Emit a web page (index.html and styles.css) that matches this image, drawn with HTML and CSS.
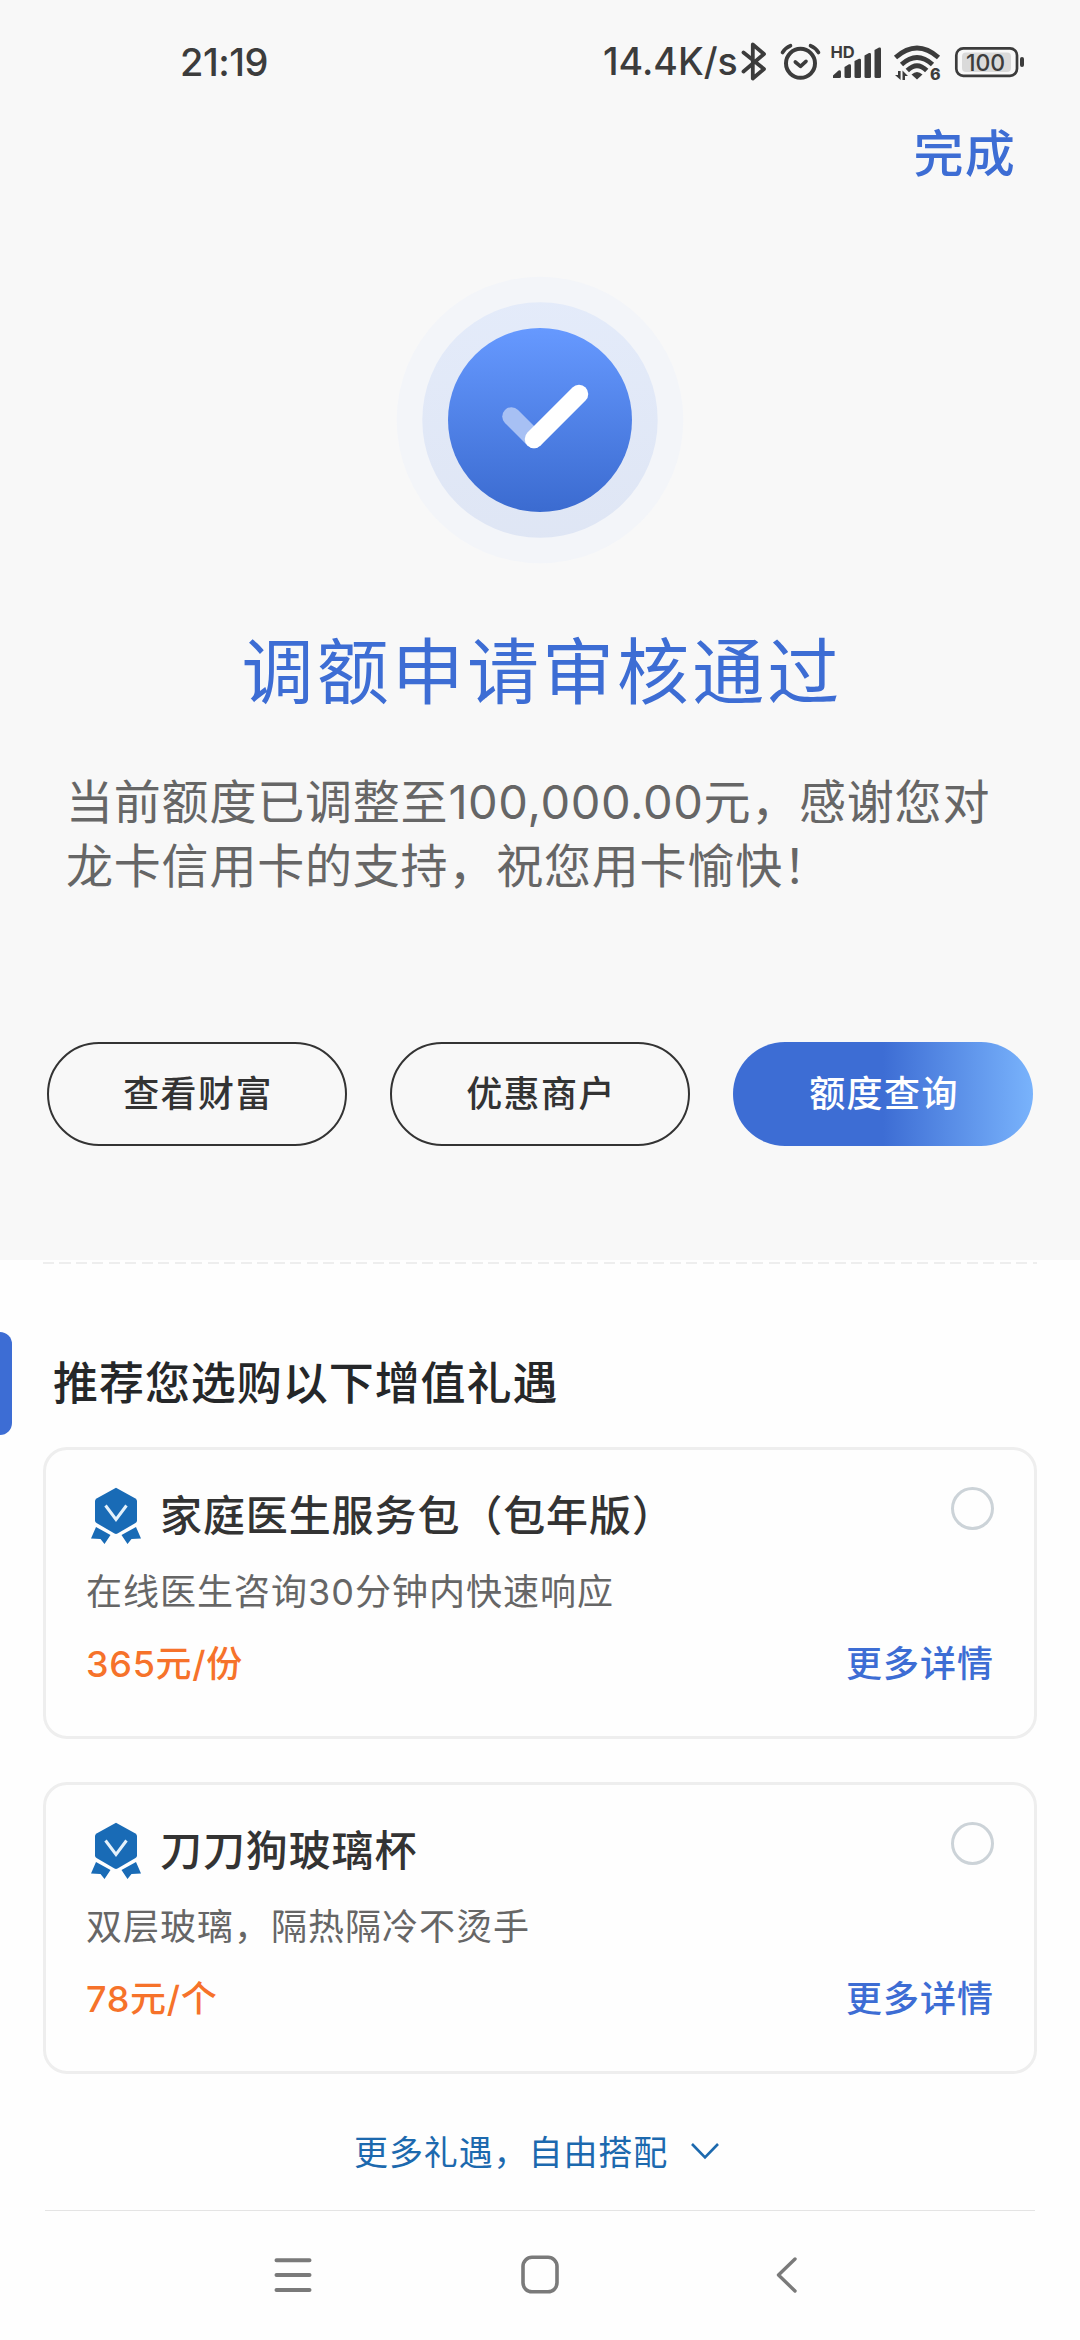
FILE: index.html
```html
<!DOCTYPE html>
<html lang="zh-CN">
<head>
<meta charset="utf-8">
<title>调额申请</title>
<link rel="stylesheet" href="styles.css">
</head>
<body>
<main class="screen">
  <section class="result">
    <header class="status">
      <span class="time">21:19</span>
      <span class="speed">14.4K/s</span>
      <svg class="status-icons" width="290" height="44" viewBox="738 40 290 44">
        <g fill="none" stroke="#3c3c3c" stroke-linecap="round" stroke-linejoin="round">
          <path stroke-width="3.800" d="M743.500 52.500L764 69L752.800 78.500V44.500L764 54L743.500 71.500"/>
          <circle cx="800.500" cy="63.300" r="14.500" stroke-width="4"/>
          <path stroke-width="3.600" d="M795.300 62L800.500 66.300L806 61.300"/>
          <path stroke-width="3.600" d="M782.500 52.500Q785.500 47.500 790.500 45.700M810.500 45.700Q815.500 47.500 818.500 52.500"/>
        </g>
        <g fill="#3c3c3c">
          <path d="M833 78V75.500L838.500 70.500Q841 69.500 841 72V76.500Q841 78 839.500 78Z"/>
          <path d="M844.500 67L849 64.300Q851 63.800 851 65.500V76.500Q851 78 849.500 78H846Q844.500 78 844.500 76.500Z"/>
          <path d="M854.500 61L859 58.800Q861 58.300 861 60V76.500Q861 78 859.500 78H856Q854.500 78 854.500 76.500Z"/>
          <path d="M864.500 55.500L869 53Q871 52.500 871 54.200V76.500Q871 78 869.500 78H866Q864.500 78 864.500 76.500Z"/>
          <path d="M874.500 50L879 47.600Q881 47.200 881 49V76.500Q881 78 879.500 78H876Q874.500 78 874.500 76.500Z"/>
          <text class="hd" x="830.500" y="58">HD</text>
          <path d="M911.500 74.500Q917 69.500 922.500 74.500L917 79.500Z"/>
          <path d="M898 71h2.600v9L895 75h3zM902.500 80V70.500L908 76h-3v4z"/>
          <text class="six" x="930" y="80">6</text>
        </g>
        <g fill="none" stroke="#3c3c3c" stroke-width="4.800">
          <path d="M895.500 57.500Q917 38.500 938.500 57.500"/>
          <path d="M901.500 64.500Q917 50.500 932.500 64.500"/>
          <path d="M907.300 70.500Q917 61 926.700 70.500"/>
        </g>
        <rect x="962" y="52.500" width="49" height="19.500" rx="4" fill="#dadada"/>
        <rect x="956.300" y="48.300" width="60.700" height="27.500" rx="7" fill="none" stroke="#3c3c3c" stroke-width="2.700"/>
        <rect x="1020" y="57" width="4" height="10" rx="2" fill="#3c3c3c"/>
        <text class="battery" x="985.500" y="70.700" text-anchor="middle">100</text>
      </svg>
    </header>
    <nav class="topbar"><a class="done">完成</a></nav>
    <svg class="badge" width="288" height="288" viewBox="0 0 288 288">
      <defs><linearGradient id="disc" x1="0" y1="0" x2="0" y2="1"><stop offset="0" stop-color="#6699ff"/><stop offset="1" stop-color="#3b6bd0"/></linearGradient></defs>
      <circle cx="144" cy="144" r="143.300" fill="#f3f5f9"/>
      <circle cx="144" cy="144" r="117.700" fill="url(#disc)" opacity=".11"/>
      <circle cx="144" cy="144" r="92" fill="url(#disc)"/>
      <path d="M115.500 140.500L138 163" stroke="#a7c0f4" stroke-width="18.500" stroke-linecap="round"/>
      <path d="M183 118L138 163" stroke="#fff" stroke-width="18.500" stroke-linecap="round"/>
    </svg>
    <h1 class="title">调额申请审核通过</h1>
    <p class="message">当前额度已调整至<span class="num">100,000.00</span>元，感谢您对<br>龙卡信用卡的支持，祝您用卡愉快！</p>
    <div class="actions">
      <a class="btn">查看财富</a>
      <a class="btn">优惠商户</a>
      <a class="btn primary">额度查询</a>
    </div>
  </section>

  <section class="offers">
    <div class="dashes"></div>
    <div class="section-head"><span class="accent"></span><h2 class="heading">推荐您选购以下增值礼遇</h2></div>
    <article class="card">
      <div class="card-head">
        <svg class="medal" width="52" height="58" viewBox="0 0 52 58"><g fill="#196bb6"><path d="M26 .8L45.500 11.500Q47 12.500 47 14V33.500Q47 35 45.500 36L27.500 46.500Q26 47.300 24.500 46.500L6.500 36Q5 35 5 33.500V14Q5 12.500 6.500 11.500Z"/><path d="M6 40L20.500 48L14.500 57L10.500 52L1 51.500ZM46 40L31.500 48L37.500 57L41.500 52L51 51.500Z"/></g><path d="M15.500 18.500L26 32.500L36.500 18.500" fill="none" stroke="#e4f1fb" stroke-width="3"/></svg>
        <h3 class="name">家庭医生服务包（包年版）</h3>
        <span class="radio"></span>
      </div>
      <p class="desc">在线医生咨询30分钟内快速响应</p>
      <div class="card-foot"><span class="price">365元/份</span><a class="more">更多详情</a></div>
    </article>
    <article class="card">
      <div class="card-head">
        <svg class="medal" width="52" height="58" viewBox="0 0 52 58"><g fill="#196bb6"><path d="M26 .8L45.500 11.500Q47 12.500 47 14V33.500Q47 35 45.500 36L27.500 46.500Q26 47.300 24.500 46.500L6.500 36Q5 35 5 33.500V14Q5 12.500 6.500 11.500Z"/><path d="M6 40L20.500 48L14.500 57L10.500 52L1 51.500ZM46 40L31.500 48L37.500 57L41.500 52L51 51.500Z"/></g><path d="M15.500 18.500L26 32.500L36.500 18.500" fill="none" stroke="#e4f1fb" stroke-width="3"/></svg>
        <h3 class="name">刀刀狗玻璃杯</h3>
        <span class="radio"></span>
      </div>
      <p class="desc">双层玻璃，隔热隔冷不烫手</p>
      <div class="card-foot"><span class="price">78元/个</span><a class="more">更多详情</a></div>
    </article>
    <a class="expand">更多礼遇，自由搭配<svg class="chevron" width="30" height="20" viewBox="0 0 30 20"><path d="M2 3L15 16.500L28 3" fill="none" stroke="#1c69ae" stroke-width="2.600"/></svg></a>
  </section>

  <footer class="sysnav">
    <svg width="38" height="40" viewBox="0 0 38 40"><path d="M2.500 5.200H35.500M2.500 20H35.500M2.500 35H35.500" stroke="#7a7a7a" stroke-width="4" stroke-linecap="round"/></svg>
    <svg width="38" height="40" viewBox="0 0 38 40"><rect x="2" y="2.300" width="34" height="34.500" rx="9" fill="none" stroke="#7a7a7a" stroke-width="3.600"/></svg>
    <svg width="38" height="40" viewBox="0 0 38 40"><path d="M27 4L10.500 20L27 36" fill="none" stroke="#7a7a7a" stroke-width="3.400" stroke-linecap="round" stroke-linejoin="round"/></svg>
  </footer>
</main>
</body>
</html>
```
FILE: styles.css
```css
* { box-sizing: border-box; margin: 0; padding: 0; }
body {
  width: 1080px;
  background: #fefefe;
  font-family: Inter, "Noto Sans CJK SC", sans-serif;
  color: #333;
}
.screen { width: 1080px; height: 2340px; display: flex; flex-direction: column; overflow: hidden; }
h1, h2, h3 { font-weight: 400; }

.result { height: 1260px; background: #f8f8f8; display: flex; flex-direction: column; align-items: center; }

.status { width: 100%; height: 126px; display: flex; align-items: flex-start; padding: 40px 52px 0 180px; color: #3c3c3c; line-height: 44px; }
.time { width: 422px; font-size: 38px; letter-spacing: -.5px; font-weight: 500; }
.speed { width: 136px; padding-left: 1px; font-size: 37.500px; font-weight: 500; white-space: nowrap; }
.status-icons { display: block; flex: none; }
.hd { font-size: 16.500px; font-weight: 700; }
.six { font-size: 16px; font-weight: 800; }
.battery { font-size: 23px; font-weight: 500; fill: #3c3c3c; }

.topbar { width: 100%; display: flex; justify-content: flex-end; padding-right: 64px; }
.done { font-size: 50px; line-height: 56px; letter-spacing: 1.200px; font-weight: 500; color: #3d6dd4; }

.badge { display: block; margin-top: 94px; }
.title { margin-top: 58px; padding-left: 4px; font-size: 72px; line-height: 100px; letter-spacing: 3.100px; color: #3d6dd4; }
.message { width: 100%; margin-top: 48px; padding-left: 66px; font-size: 47px; line-height: 64px; letter-spacing: .8px; color: #666; white-space: nowrap; }
.num { letter-spacing: .6px; }

.actions { display: flex; gap: 43px; margin-top: 144px; }
.btn { width: 300px; height: 104px; padding-left: 2px; border: 2px solid #333; border-radius: 52px; font-size: 36px; line-height: 100px; letter-spacing: 1.400px; font-weight: 500; text-align: center; }
.primary { border: 0; line-height: 104px; color: #fff; background: linear-gradient(90deg, #3d6dd4 50%, #79b3fc); }

.offers { height: 951px; padding: 2px 43px 0; display: flex; flex-direction: column; background: linear-gradient(#e4e4e4, #e4e4e4) center bottom / 990px 1px no-repeat; }
.dashes { height: 2px; flex: none; background: repeating-linear-gradient(90deg, #eee 0 11px, transparent 11px 16.500px); }
.section-head { flex: none; display: flex; gap: 41px; height: 103px; margin: 68px 0 12px -43px; }
.accent { width: 12px; border-radius: 0 12px 12px 0; background: #3d6dd4; }
.heading { font-size: 45px; line-height: 103px; letter-spacing: .95px; font-weight: 500; color: #252729; }

.card { flex: none; height: 292px; margin-bottom: 43px; padding: 35px 40px 0; border: 3px solid #eee; border-radius: 24px; }
.card-head { display: flex; height: 68px; }
.medal { flex: none; margin: 2px 18px 0 4px; }
.name { flex: 1; font-size: 42px; line-height: 62px; letter-spacing: .9px; font-weight: 500; }
.radio { flex: none; width: 43px; height: 43px; margin-top: 2px; border: 3px solid #ccd3d8; border-radius: 50%; }
.desc { height: 76px; font-size: 36px; line-height: 78px; letter-spacing: 1px; color: #666; }
.card-foot { display: flex; justify-content: space-between; line-height: 70px; font-size: 36px; font-weight: 500; }
.price { letter-spacing: .7px; color: #f6722a; }
.more { color: #3d6dd4; letter-spacing: 1px; }

.expand { display: flex; align-items: center; height: 67px; padding-left: 311px; font-size: 34px; letter-spacing: .9px; color: #1c69ae; }
.chevron { margin-left: 22px; }

.sysnav { height: 129px; display: flex; gap: 209px; padding: 44px 0 0 274px; }
```
